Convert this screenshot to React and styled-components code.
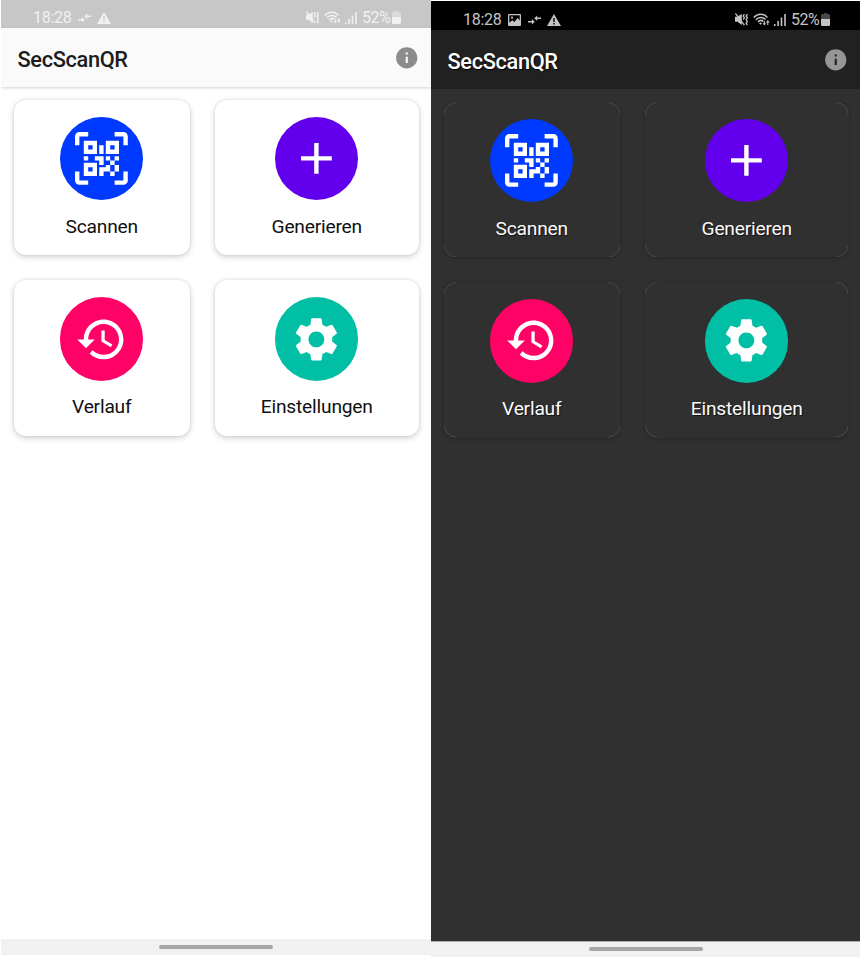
import React from "react";
import styled, { createGlobalStyle, ThemeProvider } from "styled-components";

const Global = createGlobalStyle`
  *, *::before, *::after { box-sizing: border-box; }
  body { margin: 0; background: #fff; font-family: Roboto, sans-serif; }
`;

const light = {
  page: "#ffffff", status: "#c7c7c7", statusText: "#f1f1f1", statusFaint: "#dadada",
  bar: "#fafafa", title: "#1c1c1c", titleShadow: "none", titleWeight: 475,
  barShadow: "0 1px 3px rgba(0,0,0,.18)", info: "#8c8c8c",
  card: "#ffffff", label: "#101010", labelWeight: 370, corner: "transparent",
  cardShadow: "0 2px 6px rgba(0,0,0,.18), 0 0 3px rgba(0,0,0,.1)",
  labelShadow: "none", navLine: "#f1f1f1",
  top: "0px", statusH: "28px", statusPad: "5px", barH: "59px", total: "955px", cardsTop: "12.6px",
};
const dark = {
  page: "#303030", status: "#000000", statusText: "#c4c4c4", statusFaint: "#484848",
  bar: "#212121", title: "#ffffff", titleShadow: "1px 1px 1px #000", titleWeight: 500,
  barShadow: "none", info: "#969696",
  card: "#303030", label: "#fafafa", labelWeight: 400, corner: "#484848",
  cardShadow: "0 2px 4px rgba(0,0,0,.14), 0 0 2px rgba(0,0,0,.1)",
  labelShadow: "1px 1px 1px rgba(0,0,0,.65)", navLine: "#aaaaaa",
  top: "1px", statusH: "29px", statusPad: "6px", barH: "59px", total: "956px", cardsTop: "12.5px",
};

const Screens = styled.main`
  display: grid;
  grid-template-columns: 430px 429px;
  align-items: start;
  width: 860px;
  height: 960px;
  padding-left: 1px;
  overflow: hidden;
`;
const Phone = styled.section`
  display: flex;
  flex-direction: column;
  height: ${(p) => p.theme.total};
  margin-top: ${(p) => p.theme.top};
  background: ${(p) => p.theme.page};
  overflow: hidden;
`;
const StatusBar = styled.header`
  flex: none;
  display: flex;
  justify-content: space-between;
  height: ${(p) => p.theme.statusH};
  padding: ${(p) => p.theme.statusPad} 30px 0 32px;
  background: ${(p) => p.theme.status};
  color: ${(p) => p.theme.statusText};
  font-size: 16px;
  line-height: 25px;
`;
const StatusGroup = styled.div`
  display: flex;
  align-items: center;
  height: 25px;
`;
const Clock = styled.time`
  width: 39px;
  margin-right: 6px;
  letter-spacing: -0.25px;
`;
const Percent = styled.span`
  width: 29px;
  margin: 0 1px 0 5px;
  letter-spacing: -0.5px;
`;
const Glyph = styled.svg`
  display: block;
  flex: none;
  width: ${(p) => p.$w}px;
  height: ${(p) => p.$h}px;
  margin-right: ${(p) => p.$gap || 0}px;
  fill: currentColor;
`;
const AppBar = styled.div`
  flex: none;
  display: flex;
  align-items: center;
  justify-content: space-between;
  height: ${(p) => p.theme.barH};
  padding: 0 12px 0 16.5px;
  background: ${(p) => p.theme.bar};
  box-shadow: ${(p) => p.theme.barShadow};
`;
const Title = styled.h1`
  margin: 4px 0 0;
  color: ${(p) => p.theme.title};
  font-size: 21.8px;
  line-height: 26px;
  font-weight: ${(p) => p.theme.titleWeight};
  letter-spacing: -0.36px;
  text-shadow: ${(p) => p.theme.titleShadow};
`;
const InfoButton = styled.button`
  display: block;
  padding: 0;
  border: 0;
  background: none;
  color: ${(p) => p.theme.info};
`;
const Cards = styled.div`
  flex: 1;
  display: grid;
  grid-template-columns: 176.5px 203.5px;
  grid-auto-rows: 155.5px;
  gap: 25px;
  padding: ${(p) => p.theme.cardsTop} 0 0 12.5px;
`;
const Card = styled.article`
  position: relative;
  display: flex;
  flex-direction: column;
  align-items: center;
  padding-top: 17.2px;
  border-radius: 12px;
  background: ${(p) => p.theme.card};
  box-shadow: ${(p) => p.theme.cardShadow};
`;
const CardCorners = styled.svg`
  position: absolute;
  inset: 0;
  width: 100%;
  height: 100%;
  fill: none;
  stroke: ${(p) => p.theme.corner};
`;
const Disc = styled.div`
  display: grid;
  place-items: center;
  width: 83.4px;
  height: 83.4px;
  border-radius: 50%;
  background: ${(p) => p.$color};
  color: #fff;
`;
const Label = styled.span`
  margin-top: 13.7px;
  color: ${(p) => p.theme.label};
  font-size: 19.2px;
  line-height: 26px;
  font-weight: ${(p) => p.theme.labelWeight};
  letter-spacing: -0.2px;
  text-shadow: ${(p) => p.theme.labelShadow};
`;
const NavBar = styled.footer`
  flex: none;
  display: flex;
  justify-content: center;
  height: 16px;
  padding-top: 5px;
  border-top: 1px solid ${(p) => p.theme.navLine};
  background: #f1f1f1;
`;
const NavHandle = styled.div`
  width: 114px;
  height: 4px;
  border-radius: 2px;
  background: #a6a6a6;
`;

const items = [
  { label: "Scannen", color: "#0039ff", path: "M4,4H10V10H4V4M20,4V10H14V4H20M14,15H16V13H14V11H16V13H18V11H20V13H18V15H20V18H18V20H16V18H13V20H11V16H14V15M16,15V18H18V15H16M4,20V14H10V20H4M6,6V8H8V6H6M16,6V8H18V6H16M6,16V18H8V16H6M4,11H6V13H4V11M9,11H13V15H11V13H9V11M11,6H13V10H11V6M2,2V6H0V2A2,2 0 0,1 2,0H6V2H2M22,0A2,2 0 0,1 24,2V6H22V2H18V0H22M2,18V22H6V24H2A2,2 0 0,1 0,22V18H2M22,22V18H24V22A2,2 0 0,1 22,24H18V22H22Z" },
  { label: "Generieren", color: "#6200ee", path: "M19 13h-6v6h-2v-6H5v-2h6V5h2v6h6v2z" },
  { label: "Verlauf", color: "#ff0266", path: "M13 3c-4.97 0-9 4.03-9 9H1l3.89 3.89.07.14L9 12H6c0-3.87 3.13-7 7-7s7 3.13 7 7-3.13 7-7 7c-1.93 0-3.68-.79-4.94-2.06l-1.42 1.42C8.27 19.99 10.51 21 13 21c4.97 0 9-4.03 9-9s-4.03-9-9-9zm-1 5v5l4.28 2.54.72-1.21-3.5-2.08V8H12z" },
  { label: "Einstellungen", color: "#00bfa5", path: "M19.14 12.94c.04-.3.06-.61.06-.94 0-.32-.02-.64-.07-.94l2.03-1.58c.18-.14.23-.41.12-.61l-1.92-3.32c-.12-.22-.37-.29-.59-.22l-2.39.96c-.5-.38-1.03-.7-1.62-.94l-.36-2.54c-.04-.24-.24-.41-.48-.41h-3.84c-.24 0-.43.17-.47.41l-.36 2.54c-.59.24-1.13.57-1.62.94l-2.39-.96c-.22-.08-.47 0-.59.22L2.74 8.87c-.12.21-.08.47.12.61l2.03 1.58c-.05.3-.09.63-.09.94s.02.64.07.94l-2.03 1.58c-.18.14-.23.41-.12.61l1.92 3.32c.12.22.37.29.59.22l2.39-.96c.5.38 1.03.7 1.62.94l.36 2.54c.05.24.24.41.48.41h3.84c.24 0 .44-.17.47-.41l.36-2.54c.59-.24 1.13-.56 1.62-.94l2.39.96c.22.08.47 0 .59-.22l1.92-3.32c.12-.22.07-.47-.12-.61l-2.01-1.58zM12 15.6c-1.98 0-3.6-1.62-3.6-3.6s1.62-3.6 3.6-3.6 3.6 1.62 3.6 3.6-1.62 3.6-3.6 3.6z" },
];

const Photo = () => (
  <Glyph $w={13} $h={12} $gap={7} viewBox="0 0 13 12">
    <path fillRule="evenodd" d="M1 0h11a1 1 0 0 1 1 1v10a1 1 0 0 1-1 1H1a1 1 0 0 1-1-1V1a1 1 0 0 1 1-1zm.3 1.3v7.5l3-2.6 2.1 1.7 3.2-3.8 2.1 2.3V1.3zM4 2.6a1.1 1.1 0 1 1 0 2.2 1.1 1.1 0 0 1 0-2.2z" />
  </Glyph>
);
const Arrows = () => (
  <Glyph $w={13} $h={10} $gap={6} viewBox="0 0 13 10">
    <path d="M0 6.1h3.8V3.9l3 2.8-3 2.8V7.4H0zM13 2.6H9.2V.4l-3 2.8 3 2.8V3.9H13z" />
  </Glyph>
);
const Warning = () => (
  <Glyph $w={14} $h={12} viewBox="0 0 14 12">
    <path fillRule="evenodd" d="M7 0l7 12H0zM6.3 4v4h1.4V4zm0 5v1.4h1.4V9z" />
  </Glyph>
);
const MutedVibrate = () => (
  <Glyph $w={14} $h={13} $gap={4} viewBox="0 0 14 13">
    <path d="M0 3.8h2.2L6.8 1v11L2.6 8.7H0z" />
    <path d="M.4.4l9 11.8M9.4 1.2L8.2 3l1.2 1.8-1.2 1.8M12.4 1.2l-1.3 1.8 1.3 1.8-1.3 1.8 1.3 1.8-1.3 1.8 1.3 1.8" fill="none" stroke="currentColor" strokeWidth="1.3" />
  </Glyph>
);
const Wifi = () => (
  <Glyph $w={17} $h={13} $gap={4} viewBox="0 0 17 13">
    <path d="M.7 4.6C4.7.2 10.6.2 14.4 4.4M2.8 6.8c3-3.1 6.9-3.1 9.7-.2M5 8.9c1.7-1.7 3.8-1.8 5.3-.6" fill="none" stroke="currentColor" strokeWidth="1.5" />
    <path d="M6 10.2c1-.8 2-.8 2.9 0l-1.4 1.6zM10.8 8h1.1v2.3h1.3l-1.8 2.2-1.9-2.2h1.3zM14.2 12h1.1V9.4h1.4L14.8 7l-1.9 2.4h1.3z" />
  </Glyph>
);
const Signal = () => (
  <Glyph $w={12} $h={12} viewBox="0 0 12 12">
    <path d="M0 10h1.5v2H0zM3.3 7h1.6v5H3.3zM6.7 3.5h1.6V12H6.7zM10.2 0h1.6v12h-1.6z" />
  </Glyph>
);
const BatteryBack = styled.path`
  fill: ${(p) => p.theme.statusFaint};
`;
const Battery = () => (
  <Glyph $w={9} $h={13} viewBox="0 0 9 13">
    <BatteryBack d="M3 0h3v1h1.6Q9 1 9 2.4V6H0V2.4Q0 1 1.4 1H3z" />
    <path d="M0 6h9v5.7q0 1.3-1.3 1.3H1.3Q0 13 0 11.7z" />
  </Glyph>
);

function PhoneScreen({ theme, photo }) {
  return (
    <ThemeProvider theme={theme}>
      <Phone>
        <StatusBar>
          <StatusGroup>
            <Clock>18:28</Clock>
            {photo && <Photo />}
            <Arrows />
            <Warning />
          </StatusGroup>
          <StatusGroup>
            <MutedVibrate />
            <Wifi />
            <Signal />
            <Percent>52%</Percent>
            <Battery />
          </StatusGroup>
        </StatusBar>
        <AppBar>
          <Title>SecScanQR</Title>
          <InfoButton aria-label="Info">
            <Glyph $w={25.5} $h={25.5} viewBox="0 0 24 24">
              <path d="M12 2C6.48 2 2 6.48 2 12s4.48 10 10 10 10-4.48 10-10S17.52 2 12 2zm1 15h-2v-6h2v6zm0-8h-2V7h2v2z" />
            </Glyph>
          </InfoButton>
        </AppBar>
        <Cards>
          {items.map((item, i) => {
            const w = i % 2 ? 203.5 : 176.5;
            return (
              <Card key={item.label}>
                <CardCorners viewBox={`0 0 ${w} 155.5`}>
                  <path d={`M.5 12A11.5 11.5 0 0 1 12 .5M${w - 12} .5A11.5 11.5 0 0 1 ${w - 0.5} 12M${w - 0.5} 143.5A11.5 11.5 0 0 1 ${w - 12} 155M12 155A11.5 11.5 0 0 1 .5 143.5`} />
                </CardCorners>
                <Disc $color={item.color}>
                  <Glyph $w={52.8} $h={52.8} viewBox="0 0 24 24">
                    <path d={item.path} />
                  </Glyph>
                </Disc>
                <Label>{item.label}</Label>
              </Card>
            );
          })}
        </Cards>
        <NavBar>
          <NavHandle />
        </NavBar>
      </Phone>
    </ThemeProvider>
  );
}

export default function App() {
  return (
    <>
      <Global />
      <Screens>
        <PhoneScreen theme={light} />
        <PhoneScreen theme={dark} photo />
      </Screens>
    </>
  );
}
